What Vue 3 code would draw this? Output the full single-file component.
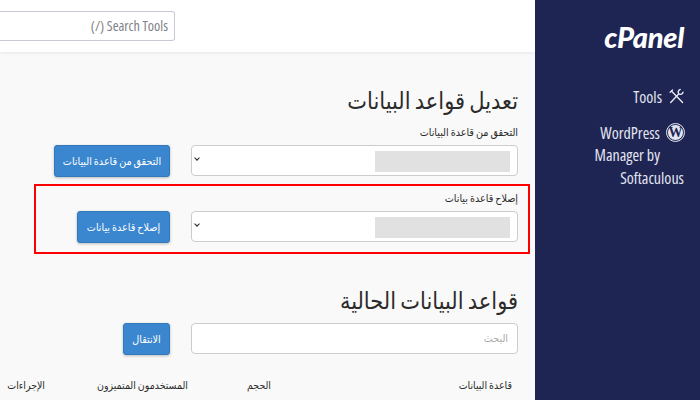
<script setup>
const columns = ['قاعدة البيانات', 'الحجم', 'المستخدمون المتميزون', 'الإجراءات']
</script>

<template>
  <div class="page">
    <main class="main">
      <header class="topbar">
        <div class="search">(/) Search Tools</div>
      </header>
      <section class="content" dir="rtl">
        <h1 class="title">تعديل قواعد البيانات</h1>
        <div class="check">
          <label class="label">التحقق من قاعدة البيانات</label>
          <div class="row">
            <div class="select"><span class="mask"></span><span class="chev"></span></div>
            <button class="btn b1">التحقق من قاعدة البيانات</button>
          </div>
        </div>
        <div class="repair">
          <label class="label">إصلاح قاعدة بيانات</label>
          <div class="row">
            <div class="select"><span class="mask"></span><span class="chev"></span></div>
            <button class="btn b2">إصلاح قاعدة بيانات</button>
          </div>
        </div>
        <h1 class="title second">قواعد البيانات الحالية</h1>
        <div class="row find">
          <div class="select placeholder">البحث</div>
          <button class="btn b3">الانتقال</button>
        </div>
        <div class="thead">
          <span v-for="c in columns" :key="c">{{ c }}</span>
        </div>
      </section>
    </main>
    <aside class="side">
      <div class="logo">cPanel</div>
      <nav class="nav">
        <div class="item">
          <span>Tools</span>
          <svg class="ico" viewBox="0 0 16 16" fill="none" stroke="#e8eaf4" stroke-width="1.4" stroke-linecap="round" stroke-linejoin="round">
            <path d="M2.8 3 L14.5 15" />
            <path d="M1.2 4 L3.8 1.6" />
            <path d="M1.8 15 L10.3 5.8" />
            <path d="M10.3 5.8 C9.3 3.6 10 2 12 1" />
            <path d="M10.3 5.8 C12.5 6.8 14.5 6 15 4" />
          </svg>
        </div>
        <div class="wp">
          <div class="item">
            <span>WordPress</span>
            <span class="wpicon">W</span>
          </div>
          <div class="line indent">Manager by</div>
          <div class="line">Softaculous</div>
        </div>
      </nav>
    </aside>
  </div>
</template>

<style scoped>
.page { display: flex; width: 700px; height: 400px; overflow: hidden; font-family: "Open Sans", "DejaVu Sans Condensed", "DejaVu Sans", sans-serif; font-stretch: condensed; }
.main { width: 535px; background: #f9f9f9; }
.topbar { height: 52px; background: #fff; box-shadow: 0 1px 3px rgba(0,0,0,.08); box-sizing: border-box; padding-top: 11px; }
.search { width: 175px; height: 30px; box-sizing: border-box; border: 1px solid #c9c9d3; border-left: 0; border-radius: 0 3px 3px 0; text-align: right; padding-right: 6px; line-height: 28px; font-size: 14.2px; color: #7f7f88; }
.content { padding-top: 30px; height: 348px; overflow: hidden; box-sizing: border-box; }
.title { margin: 0 17px 0 0; font-size: 23.3px; font-weight: 400; line-height: 36px; color: #2b2b2b; }
.label { display: block; font-size: 10.7px; line-height: 16px; color: #2b2b2b; height: 16px; margin-bottom: 5px; }
.check { margin: 6px 17px 0 0; }
.repair { margin: 7px 5px 0 34px; border: 2px solid #f00; height: 70px; box-sizing: border-box; padding: 4px 10px 0 0; }
.row { display: flex; gap: 21px; }
.select { width: 327px; height: 31px; box-sizing: border-box; background: #fff; border: 1px solid #ccc; border-radius: 4px; position: relative; flex: none; }
.mask { position: absolute; right: 7px; top: 5px; width: 135px; height: 21px; background: #e1e1e1; }
.chev { position: absolute; left: 3px; top: 10px; width: 3px; height: 3px; border: solid #222; border-width: 0 1.5px 1.5px 0; transform: rotate(45deg); }
.btn { height: 32px; padding: 0; border: 1px solid #3079bd; border-radius: 3px; background: #3a87d0; color: #fff; font: inherit; font-size: 10.7px; box-shadow: 0 1px 3px rgba(0,0,0,.25); }
.b1 { width: 116px; }
.b2 { width: 93px; }
.b3 { width: 47px; }
.second { margin-top: 28px; }
.find { margin: 5px 17px 0 0; }
.placeholder { line-height: 29px; padding-right: 9px; font-size: 10.7px; color: #aaa; }
.thead { display: grid; grid-template-columns: 241px 83px 143px 1fr; margin: 22px 23px 0 0; font-size: 10.5px; line-height: 16px; color: #2b2b2b; }
.side { width: 165px; background: #1f2553; color: #fff; padding: 20px 16px 0 0; box-sizing: border-box; text-align: right; }
.logo { font-family: "Lato", sans-serif; font-weight: 900; font-style: italic; font-stretch: normal; font-size: 29px; line-height: 34px; letter-spacing: -.3px; }
.nav { margin-top: 32px; font-size: 16px; color: #e3e6f1; }
.item { display: flex; justify-content: flex-end; gap: 7px; line-height: 22px; align-items: flex-start; }
.ico { width: 15px; height: 16px; margin-top: 2px; }
.wp { margin-top: 14px; }
.line { line-height: 22.5px; }
.indent { margin-right: 24px; }
.wpicon { width: 17px; height: 17px; margin-top: 2px; flex: none; box-sizing: border-box; border-radius: 50%; background: #e3e6f1; color: #1f2553; border: 1px solid #1f2553; outline: 1px solid #e3e6f1; font-family: "Liberation Serif", serif; font-weight: 700; font-size: 14px; line-height: 15px; text-align: center; }
</style>
